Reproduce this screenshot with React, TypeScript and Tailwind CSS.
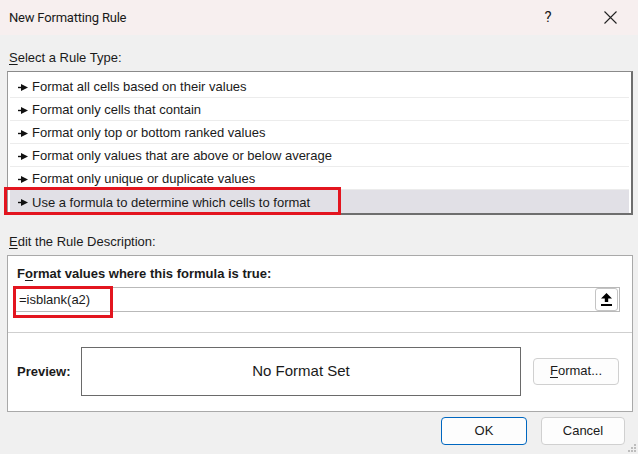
import React from 'react';

const RULES = [
  'Format all cells based on their values',
  'Format only cells that contain',
  'Format only top or bottom ranked values',
  'Format only values that are above or below average',
  'Format only unique or duplicate values',
  'Use a formula to determine which cells to format',
];

function Pointer() {
  return (
    <svg width="10" height="7" viewBox="0 0 10 7" className="shrink-0">
      <rect x="0" y="2.8" width="4" height="1.4" fill="#111" />
      <path d="M3 0 L10 3.5 L3 7 Z" fill="#111" />
    </svg>
  );
}

function UploadIcon() {
  return (
    <svg width="11" height="13" viewBox="0 0 11 13">
      <path d="M5.5 0 L11 5.5 L7.2 5.5 L7.2 9 L3.8 9 L3.8 5.5 L0 5.5 Z" fill="#000" />
      <rect x="0" y="11" width="11" height="2" fill="#000" />
    </svg>
  );
}

export default function App() {
  return (
    <div
      className="w-[638px] h-[454px] bg-[#f0f0f0] text-[#1a1a1a] relative overflow-hidden"
      style={{ fontFamily: '"Liberation Sans", Arial, sans-serif' }}
    >
      {/* title bar */}
      <div className="h-[35px] bg-[#f7efef] flex items-center pl-[9px]">
        <span className="flex-1 text-[13px] font-['Roboto',sans-serif] tracking-[-0.2px]">New Formatting Rule</span>
        <span className="w-[20px] text-center text-[15px] mr-[46px] font-['Roboto',sans-serif]">?</span>
        <svg width="13" height="13" viewBox="0 0 13 13" className="mr-[21px]">
          <path d="M0.5 0.5 L12.5 12.5 M12.5 0.5 L0.5 12.5" stroke="#222" strokeWidth="1.1" />
        </svg>
      </div>

      <div className="pl-[7px] pr-[5px]">
        <div className="mt-[15px] h-[16px] leading-[16px] pl-[2px] text-[13px]">
          <span className="underline underline-offset-2">S</span>elect a Rule Type:
        </div>

        {/* rule list */}
        <div className="relative mt-[5px]">
          <div className="bg-white border-t border-l border-r-2 border-b-2 border-t-[#8a8a8a] border-l-[#9a9a9a] border-r-[#6e6e6e] border-b-[#6e6e6e] pt-[3px] px-[2px]">
            {RULES.map((r, i) => (
              <div
                key={r}
                className={
                  'h-[23px] pt-[2px] flex items-center gap-[4px] pl-[8px] text-[13px] ' +
                  (i === RULES.length - 1 ? 'bg-[#e1e0e6]' : 'border-b border-[#ececec]')
                }
              >
                <Pointer />
                <span>{r}</span>
              </div>
            ))}
          </div>
          <div className="absolute left-[-3px] top-[116px] w-[337px] h-[28px] border-[3px] border-[#e3151f]" />
        </div>

        <div className="mt-[19px] h-[16px] leading-[16px] pl-[2px] text-[13px]">
          <span className="underline underline-offset-2">E</span>dit the Rule Description:
        </div>

        {/* rule description */}
        <div className="mt-[5px] h-[157px] bg-white border border-[#a9a9a9] flex flex-col">
          <div className="pt-[10px] pl-[9px] h-[16px] box-content leading-[16px] text-[13px] font-bold">
            F<span className="underline underline-offset-2">o</span>rmat values where this formula is true:
          </div>
          <div className="relative mt-[5px] ml-[6px] w-[606px] h-[25px] border border-[#b9b9b9] flex items-center pl-[4px] pr-[1px] text-[13px]">
            <span className="flex-1 pt-[1px]">=isblank(a2)</span>
            <div className="w-[23px] h-[23px] rounded-[3px] border border-[#c4c4c4] flex items-center justify-center">
              <UploadIcon />
            </div>
            <div className="absolute left-[-2px] top-[-2px] w-[100px] h-[32px] border-[3px] border-[#e3151f]" />
          </div>
          <div className="mt-[20px] border-t border-[#cfcfcf]" />
          <div className="flex-1 flex items-center pl-[9px] pr-[13px] pb-[1px]">
            <span className="w-[64px] text-[13px] font-bold">Preview:</span>
            <div className="w-[440px] h-[49px] border border-[#6a6a6a] flex items-center justify-center text-[15px]">
              No Format Set
            </div>
            <div className="ml-[12px] w-[86px] h-[27px] rounded-[4px] border border-[#d0d0d0] bg-[#fdfdfd] flex items-center justify-center text-[13px] mt-[-1px]">
              <span className="underline underline-offset-2">F</span>ormat...
            </div>
          </div>
        </div>

        {/* footer buttons */}
        <div className="flex justify-end gap-[14px] mt-[5px] pr-[8px]">
          <div className="w-[86px] h-[28px] rounded-[4px] border border-[#0067c0] bg-[#fdfdfd] flex items-center justify-center text-[13px]">
            OK
          </div>
          <div className="w-[84px] h-[28px] rounded-[4px] border border-[#d0d0d0] bg-[#fdfdfd] flex items-center justify-center text-[13px]">
            Cancel
          </div>
        </div>
      </div>

      {/* resize grip */}
      <svg width="9" height="9" viewBox="0 0 9 9" className="absolute right-[1px] bottom-[1px]">
        <rect x="6" y="0" width="2" height="2" fill="#bdbdbd" />
        <rect x="3" y="3" width="2" height="2" fill="#bdbdbd" />
        <rect x="6" y="3" width="2" height="2" fill="#bdbdbd" />
        <rect x="0" y="6" width="2" height="2" fill="#bdbdbd" />
        <rect x="3" y="6" width="2" height="2" fill="#bdbdbd" />
        <rect x="6" y="6" width="2" height="2" fill="#bdbdbd" />
      </svg>
    </div>
  );
}
